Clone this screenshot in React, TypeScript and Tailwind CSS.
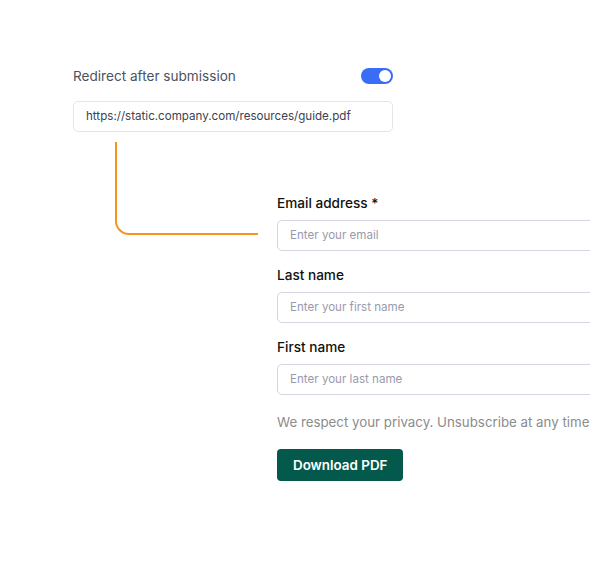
import React from "react";

function Field({ label, placeholder }: { label: string; placeholder: string }) {
  return (
    <div className="flex flex-col">
      <label className="text-[13.6px] leading-5 font-medium text-[#111111]">{label}</label>
      <div className="mt-[7px] h-[31px] w-[360px] rounded-[5px] border border-[#d6d5e2] bg-white pl-3 flex items-center">
        <span className="text-[11.6px] text-[#9b9aab]">{placeholder}</span>
      </div>
    </div>
  );
}

export default function App() {
  return (
    <div
      className="w-[590px] h-[564px] overflow-hidden bg-white"
      style={{ fontFamily: "Inter, 'Noto Sans', sans-serif" }}
    >
      <div className="pl-[73px] pt-[66px]">
        <div className="w-[320px]">
          <div className="flex items-center justify-between h-5">
            <span className="text-[13.6px] leading-5 text-[#4b5260]">Redirect after submission</span>
            <div className="w-[32px] h-[16px] rounded-full bg-[#3a6df5] flex items-center justify-end pr-[2px]">
              <div className="w-[12px] h-[12px] rounded-full bg-white" />
            </div>
          </div>
          <div className="mt-[15px] h-[31px] rounded-[5px] border border-[#e3e5ea] pl-3 flex items-center">
            <span className="text-[11.6px] text-[#3c4250]">https://static.company.com/resources/guide.pdf</span>
          </div>
        </div>
        <div className="flex mt-[10px]">
          <div className="shrink-0 ml-[42px] w-[143px] h-[93px] border-l-2 border-b-2 border-[#f5951f] rounded-bl-[14px]" />
          <div className="shrink-0 ml-[19px] mt-[51px] flex flex-col">
            <Field label="Email address *" placeholder="Enter your email" />
            <div className="mt-[14px]">
              <Field label="Last name" placeholder="Enter your first name" />
            </div>
            <div className="mt-[14px]">
              <Field label="First name" placeholder="Enter your last name" />
            </div>
            <p className="mt-[17px] text-[13.3px] leading-5 text-[#8c8c8c] whitespace-nowrap">
              We respect your privacy. Unsubscribe at any time.
            </p>
            <div className="mt-[17px]">
              <button className="h-[32px] px-4 rounded-[4px] bg-[#035a4c] text-white text-[13.4px] font-semibold">
                Download PDF
              </button>
            </div>
          </div>
        </div>
      </div>
    </div>
  );
}
